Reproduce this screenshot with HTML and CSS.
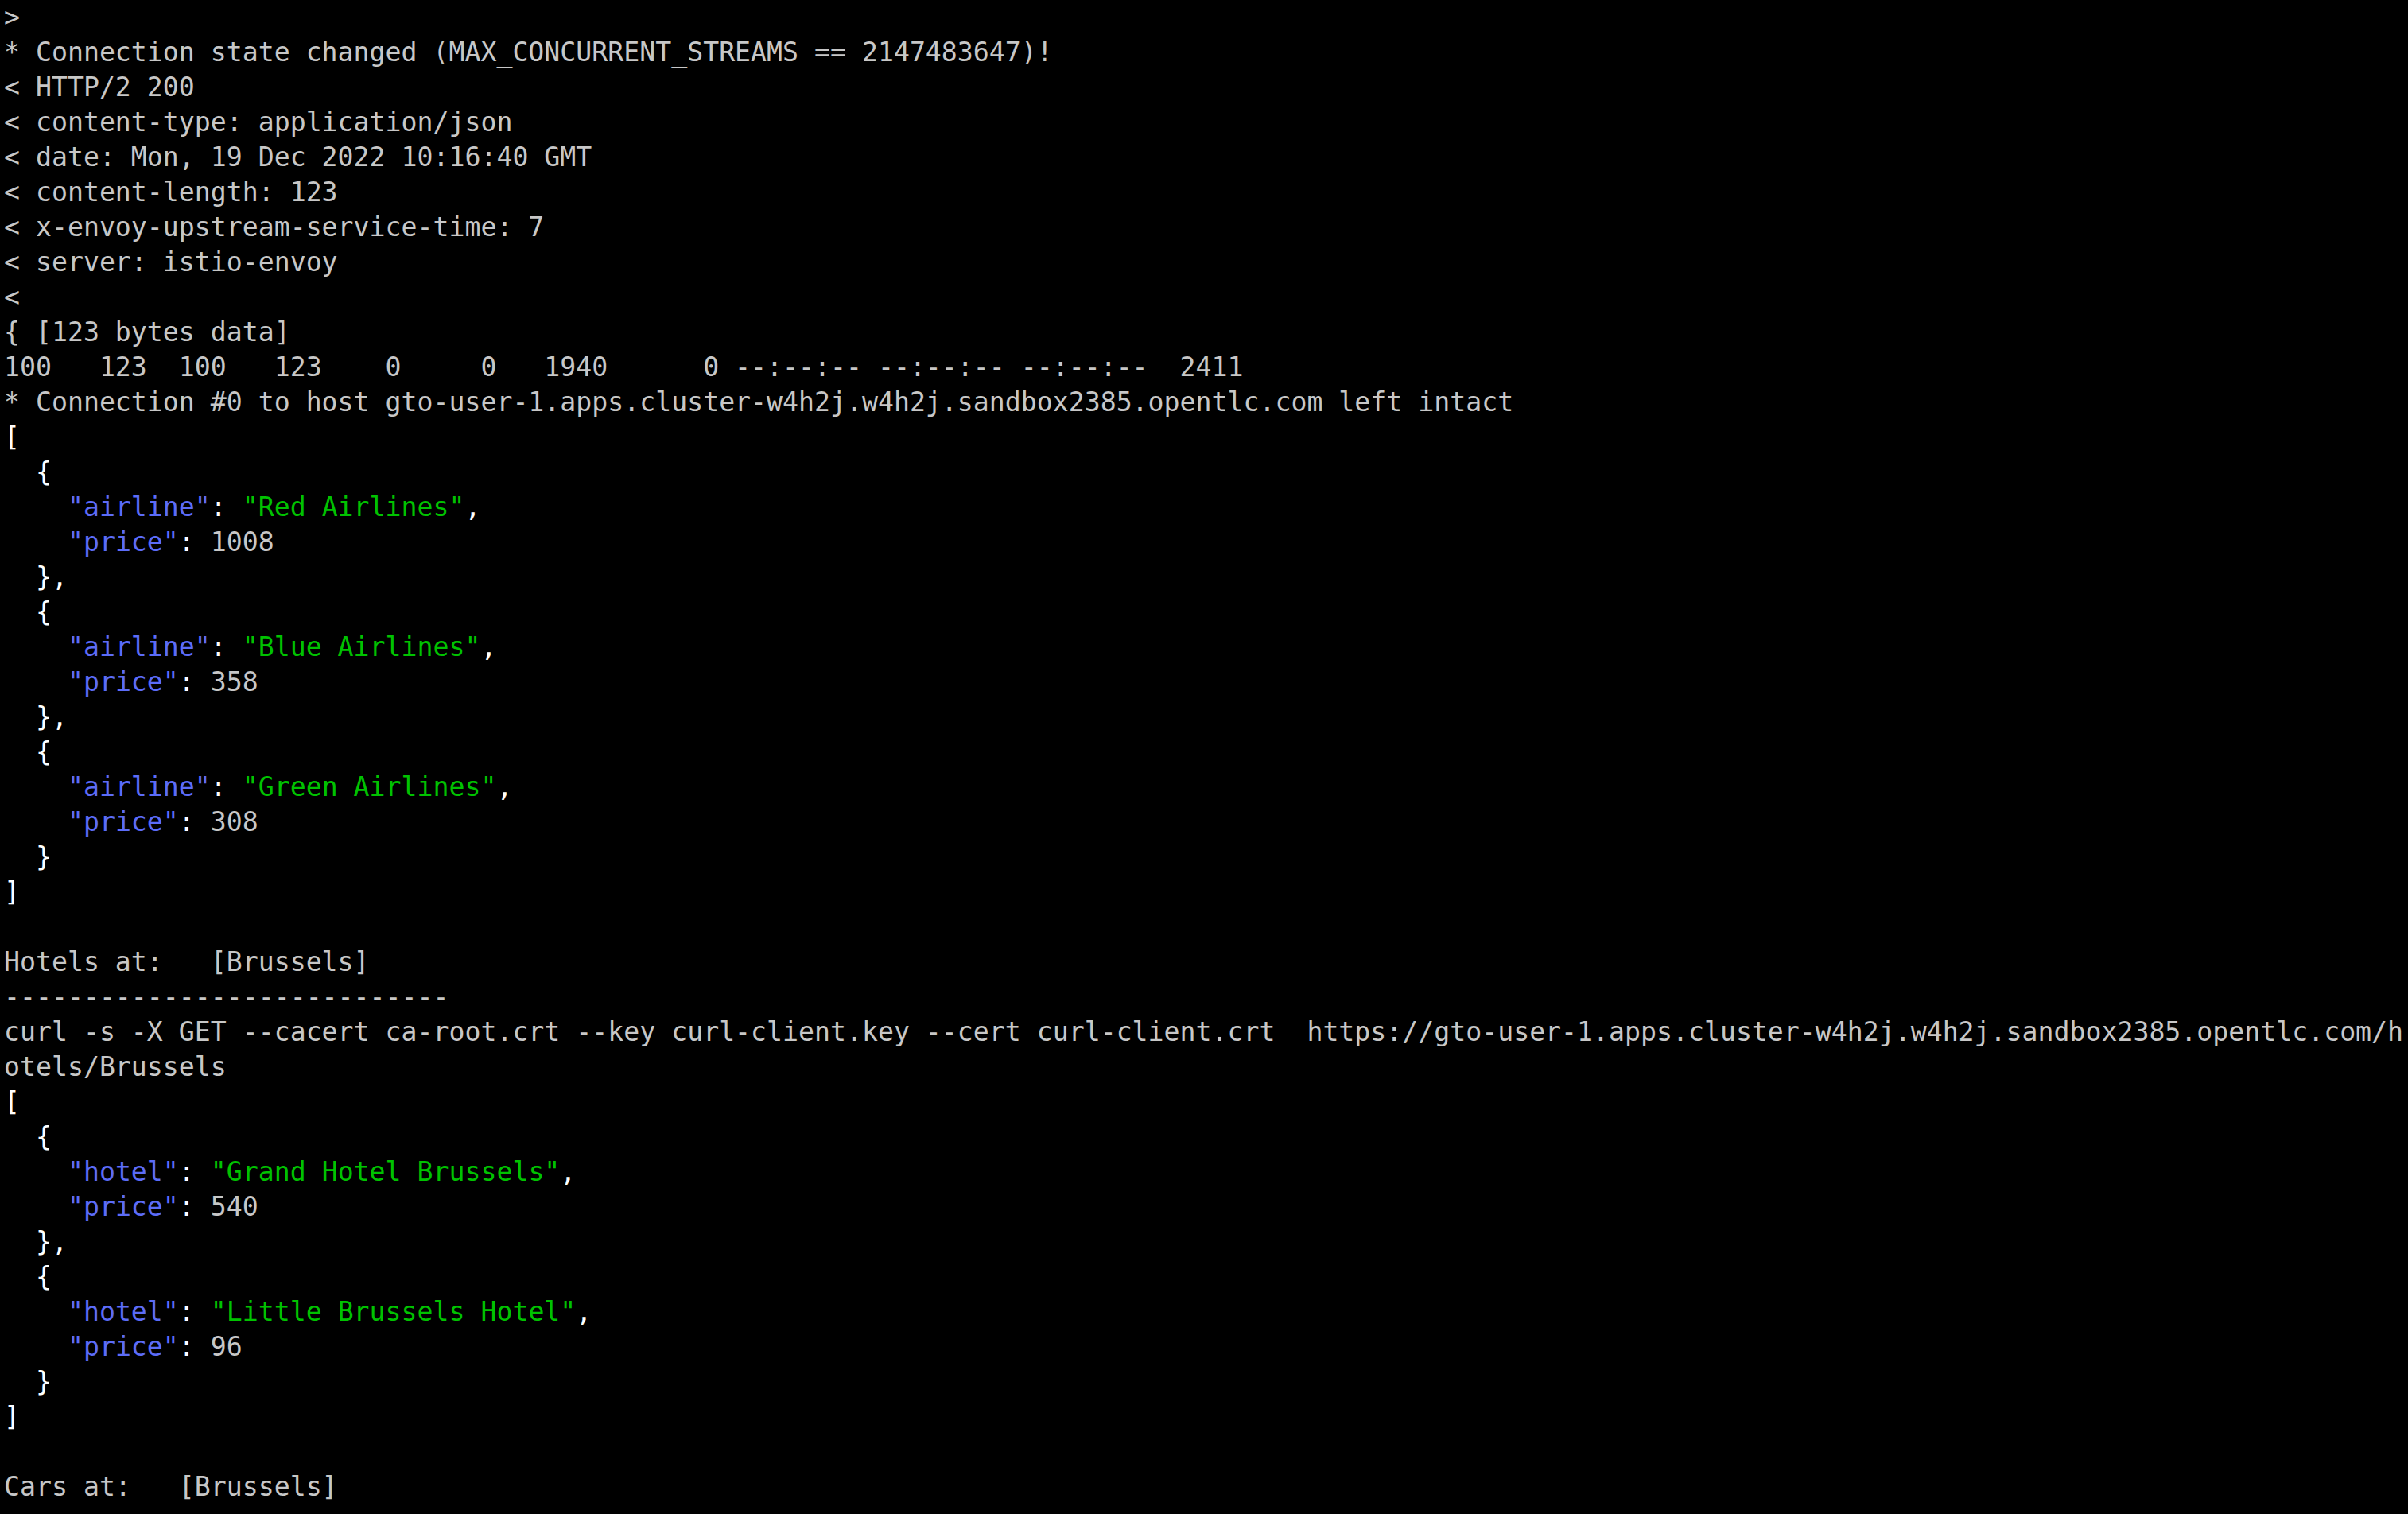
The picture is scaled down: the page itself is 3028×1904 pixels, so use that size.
FILE: index.html
```html
<!DOCTYPE html>
<html>
<head>
<meta charset="utf-8">
<link rel="stylesheet" href="styles.css">
</head>
<body>
<pre class="term">&gt;
* Connection state changed (MAX_CONCURRENT_STREAMS == 2147483647)!
&lt; HTTP/2 200
&lt; content-type: application/json
&lt; date: Mon, 19 Dec 2022 10:16:40 GMT
&lt; content-length: 123
&lt; x-envoy-upstream-service-time: 7
&lt; server: istio-envoy
&lt;
{ [123 bytes data]
100   123  100   123    0     0   1940      0 --:--:-- --:--:-- --:--:--  2411
* Connection #0 to host gto-user-1.apps.cluster-w4h2j.w4h2j.sandbox2385.opentlc.com left intact
<span class="b">[</span>
<span class="b">  {</span>
    <span class="k">"airline"</span><span class="b">: </span><span class="s">"Red Airlines"</span><span class="b">,</span>
    <span class="k">"price"</span><span class="b">: </span>1008
<span class="b">  },</span>
<span class="b">  {</span>
    <span class="k">"airline"</span><span class="b">: </span><span class="s">"Blue Airlines"</span><span class="b">,</span>
    <span class="k">"price"</span><span class="b">: </span>358
<span class="b">  },</span>
<span class="b">  {</span>
    <span class="k">"airline"</span><span class="b">: </span><span class="s">"Green Airlines"</span><span class="b">,</span>
    <span class="k">"price"</span><span class="b">: </span>308
<span class="b">  }</span>
<span class="b">]</span>

Hotels at:   [Brussels]
----------------------------
curl -s -X GET --cacert ca-root.crt --key curl-client.key --cert curl-client.crt  https://gto-user-1.apps.cluster-w4h2j.w4h2j.sandbox2385.opentlc.com/h
otels/Brussels
<span class="b">[</span>
<span class="b">  {</span>
    <span class="k">"hotel"</span><span class="b">: </span><span class="s">"Grand Hotel Brussels"</span><span class="b">,</span>
    <span class="k">"price"</span><span class="b">: </span>540
<span class="b">  },</span>
<span class="b">  {</span>
    <span class="k">"hotel"</span><span class="b">: </span><span class="s">"Little Brussels Hotel"</span><span class="b">,</span>
    <span class="k">"price"</span><span class="b">: </span>96
<span class="b">  }</span>
<span class="b">]</span>

Cars at:   [Brussels]</pre>
</body>
</html>
```

FILE: styles.css
```css
html, body {
  margin: 0;
  padding: 0;
  background: #000000;
}

body {
  width: 3028px;
  height: 1904px;
  overflow: hidden;
}

.term {
  margin: 0;
  padding: 0 0 0 5px;
  font-family: "DejaVu Sans Mono", "Liberation Mono", monospace;
  font-size: 33.2px;
  line-height: 44px;
  color: #c7c7c7;
  white-space: pre;
}

.b {
  color: #feffff;
}

.k {
  color: #5c6cf8;
}

.s {
  color: #00c200;
}
```
